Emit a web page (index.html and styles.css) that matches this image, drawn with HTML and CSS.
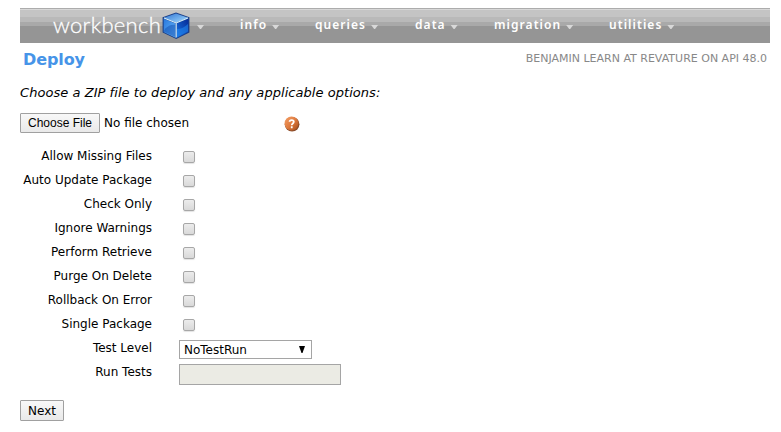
FILE: index.html
```html
<!DOCTYPE html>
<html lang="en">
<head>
<meta charset="utf-8">
<title>Workbench</title>
<link rel="stylesheet" href="styles.css">
</head>
<body>
<nav class="navbar">
  <a class="brand"><span class="wordmark">workbench</span>
    <svg class="cube" width="28" height="28" viewBox="0 0 28 28">
      <defs>
        <linearGradient id="top" x1="0" y1="0" x2="1" y2="1"><stop offset="0" stop-color="#2f75d4"/><stop offset="1" stop-color="#a5dcff"/></linearGradient>
        <linearGradient id="left" x1="0" y1="0" x2="1" y2="1"><stop offset="0" stop-color="#2878dd"/><stop offset="1" stop-color="#69b8fa"/></linearGradient>
        <linearGradient id="right" x1="0" y1="1" x2="1" y2="0"><stop offset="0" stop-color="#1672e2"/><stop offset="1" stop-color="#062a96"/></linearGradient>
      </defs>
      <path d="M14 .4 27.4 5.2V20.6L14.2 27 .6 20.6V5.2Z" fill="#1b3f87"/>
      <path d="M14 1.4 26.2 5.7 14.2 10.6 1.8 5.7Z" fill="url(#top)"/>
      <path d="M1.7 6.7 13.6 11.4V25.7L1.7 20Z" fill="url(#left)"/>
      <path d="M14.8 11.4 26.3 6.7V20L14.8 25.7Z" fill="url(#right)"/>
      <path d="M1.7 19.5C3 15 8 12.5 13.6 12.4V25.3Z" fill="#104cae" opacity=".5"/>
      <path d="M14.8 25.2V17C19 17 23 15 26 12v7.5Z" fill="#238af3" opacity=".55"/>
      <path d="M2 6.1 14.2 11 26 6.1M14.2 11V25.6" fill="none" stroke="#d5f0ff" stroke-width="1.1"/>
    </svg><i class="arrow"></i></a>
  <a class="item info">info<i class="arrow"></i></a>
  <a class="item queries">queries<i class="arrow"></i></a>
  <a class="item data">data<i class="arrow"></i></a>
  <a class="item migration">migration<i class="arrow"></i></a>
  <a class="item utilities">utilities<i class="arrow"></i></a>
</nav>
<header class="heading"><h1>Deploy</h1><span class="user">BENJAMIN LEARN AT REVATURE ON API 48.0</span></header>
<p class="intro">Choose a ZIP file to deploy and any applicable options:</p>
<div class="upload">
  <button class="button choose" type="button">Choose File</button><span class="filename">No file chosen</span>
  <svg class="help" width="16" height="16" viewBox="0 0 17 17">
    <defs><linearGradient id="orange" x1="0" y1="0" x2="1" y2="1"><stop offset="0" stop-color="#f5a168"/><stop offset=".5" stop-color="#df7b3f"/><stop offset="1" stop-color="#a44a18"/></linearGradient></defs>
    <circle cx="8.6" cy="8.8" r="7.8" fill="#8a4d2c"/><circle cx="8" cy="8" r="7.4" fill="url(#orange)"/>
    <path d="M5.9 6.2C6 3.7 10.4 3.7 10.4 6.2 10.4 8 8.2 7.8 8.2 9.7M8.2 11v2" fill="none" stroke="#fff" stroke-width="1.9"/>
  </svg>
</div>
<form class="options">
  <div class="row"><label>Allow Missing Files</label><span class="check"></span></div>
  <div class="row"><label>Auto Update Package</label><span class="check"></span></div>
  <div class="row"><label>Check Only</label><span class="check"></span></div>
  <div class="row"><label>Ignore Warnings</label><span class="check"></span></div>
  <div class="row"><label>Perform Retrieve</label><span class="check"></span></div>
  <div class="row"><label>Purge On Delete</label><span class="check"></span></div>
  <div class="row"><label>Rollback On Error</label><span class="check"></span></div>
  <div class="row"><label>Single Package</label><span class="check"></span></div>
  <div class="row"><label>Test Level</label><div class="select"><span>NoTestRun</span><svg width="6" height="7" viewBox="0 0 6 7"><path d="M0 0H6L3.5 7h-1Z"/></svg></div></div>
  <div class="row"><label>Run Tests</label><span class="textbox"></span></div>
</form>
<button class="button next" type="button">Next</button>
</body>
</html>
```
FILE: styles.css
```css
* { box-sizing: border-box; }
body {
  margin: 0;
  padding: 8px 11px 0 20px;
  height: 432px;
  overflow: hidden;
  background: #fff;
  color: #000;
  font: 12px/16px "DejaVu Sans", Verdana, sans-serif;
}
.navbar {
  display: flex;
  height: 35px;
  background: linear-gradient(#acacac 0 1px, #d8d8d8 1px 2px, #c4c4c4 2px 9px, #b9b9b9 9px 14px, #a9a9a9 14px 18px, #959595 18px);
  color: #fff;
}
.brand { display: flex; width: 220px; padding-left: 33px; }
.wordmark { width: 109px; font: 300 22px/33px Lato, sans-serif; letter-spacing: .3px; white-space: nowrap; -webkit-text-stroke: .3px #fff; }
.cube { margin-top: 4px; flex: none; }
.arrow {
  flex: none;
  width: 7px;
  height: 4px;
  margin: 17px 0 0 7px;
  background: #d8d8d8;
  clip-path: polygon(0 0, 100% 0, 57% 100%, 43% 100%);
}
.item { display: flex; font: 600 12px/34px "Noto Sans", sans-serif; letter-spacing: 1.05px; }
.item .arrow { margin-left: 5px; }
.info { width: 75px; }
.queries { width: 100px; }
.data { width: 79px; }
.migration { width: 115px; }
.heading { display: flex; justify-content: space-between; height: 35px; padding: 5px 3px 0 3px; }
h1 { margin: 0; color: #4694e8; font: bold 16px/23px "DejaVu Sans", sans-serif; letter-spacing: -.1px; }
.user { color: #888; font-size: 11px; line-height: 21px; letter-spacing: 0; }
.intro { margin: 7px 0 12px; font-size: 13px; font-style: italic; letter-spacing: .05px; }
.upload { display: flex; height: 33px; }
.button { border: 1px solid #a0a0a0; border-radius: 1px; padding: 0; background: linear-gradient(#f8f8f8, #e9e9e9); color: #000; }
.choose { width: 80px; height: 20px; font: 12px/17px "Liberation Sans", sans-serif; }
.filename { width: 184px; padding-left: 4px; line-height: 20px; }
.help { margin: 3px 0 0; }
.row { display: flex; height: 24px; }
.row label { width: 132px; margin-right: 27px; text-align: right; line-height: 20px; white-space: nowrap; }
.check {
  width: 12px;
  height: 12px;
  margin: 5px 0 0 4px;
  border: 1px solid #a7a7a7;
  border-radius: 2px;
  background: linear-gradient(#ececec, #d9d9d9);
  box-shadow: 0 1px 1px #e3e3e3;
}
.select { display: flex; justify-content: space-between; width: 133px; height: 19px; margin-top: 2px; padding: 0 6px 0 4px; border: 1px solid #a5a5a5; line-height: 18px; }
.select svg { margin-top: 5px; }
.textbox { width: 162px; height: 21px; margin-top: 2px; border: 1px solid #a5a5a5; background: #ebebe4; }
.next { display: block; width: 44px; height: 21px; margin-top: 14px; font: 12px/18px "DejaVu Sans", sans-serif; }
```
